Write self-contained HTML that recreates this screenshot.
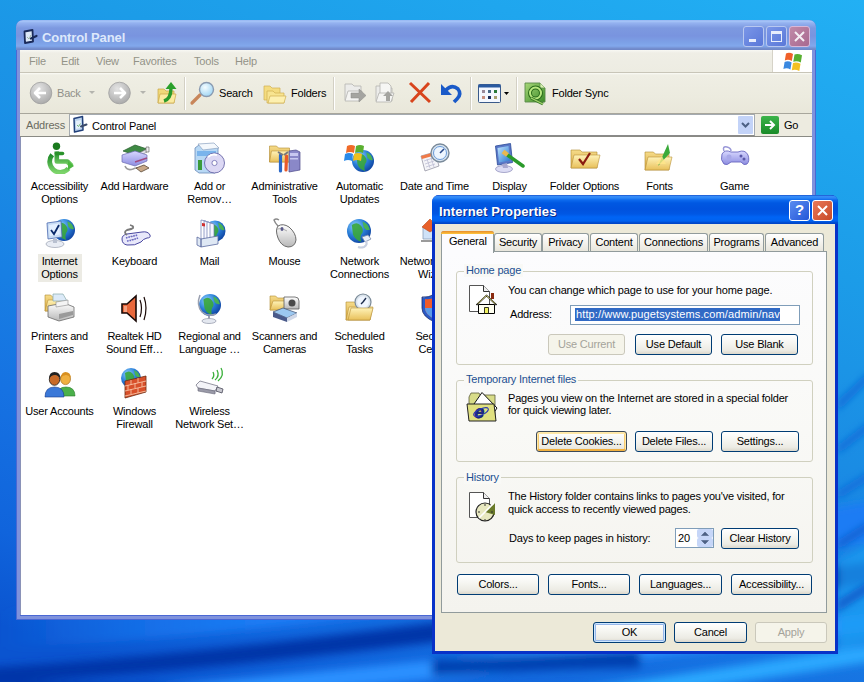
<!DOCTYPE html>
<html><head><meta charset="utf-8">
<style>
*{margin:0;padding:0;box-sizing:border-box}
html,body{width:864px;height:682px;overflow:hidden}
body{position:relative;font-family:"Liberation Sans",sans-serif;font-size:11px;color:#000;letter-spacing:-0.2px;
background:linear-gradient(200deg,#24b2f4 0%,#1c9ce8 25%,#1a8ce2 38%,#1574dc 58%,#0e5ad0 78%,#0a4cc6 100%);}
.a{position:absolute}
.t{position:absolute;white-space:nowrap;line-height:13px}
.sep{position:absolute;width:2px;border-left:1px solid #d3d0c4;border-right:1px solid #fff}
.btn{position:absolute;height:21px;border:1px solid #003c74;border-radius:3px;background:linear-gradient(180deg,#fff 0,#f6f6f2 40%,#ecebe4 80%,#dcd8cc 100%);text-align:center;line-height:19px;white-space:nowrap}
.btn.dis{border-color:#cac8bb;color:#a4a39a;background:#f5f4ea}
.grp{position:absolute;border:1px solid #d0d0bf;border-radius:3px}
.gl{position:absolute;color:#1d5092;background:#f9f9f6;padding:0 2px;line-height:13px;white-space:nowrap}
.lbl{position:absolute;width:75px;text-align:center;line-height:13px}
.tab{position:absolute;top:233px;height:18px;border:1px solid #919b9c;border-bottom:none;border-radius:3px 3px 0 0;background:linear-gradient(180deg,#fff 0,#f4f3ee 50%,#e8e6dc 100%);text-align:center;line-height:17px}
</style></head><body>

<!--BG--><svg class="a" style="left:0;top:0" width="864" height="682">
<defs>
<linearGradient id="bgg" gradientUnits="userSpaceOnUse" x1="864" y1="0" x2="560" y2="830">
<stop offset="0" stop-color="#22b0f4"/><stop offset="0.3" stop-color="#1c9ce8"/><stop offset="0.5" stop-color="#1a8ce4"/><stop offset="0.75" stop-color="#1672e2"/><stop offset="0.9" stop-color="#1064dc"/><stop offset="1" stop-color="#0a54d0"/>
</linearGradient>
<filter id="bl5" x="-50%" y="-100%" width="200%" height="300%"><feGaussianBlur stdDeviation="4"/></filter>
<filter id="bl3" x="-100%" y="-100%" width="300%" height="300%"><feGaussianBlur stdDeviation="3"/></filter>
<linearGradient id="fadeL" gradientUnits="userSpaceOnUse" x1="0" y1="0" x2="260" y2="0"><stop offset="0" stop-color="#1a7cf4" stop-opacity="0"/><stop offset="1" stop-color="#1a7cf4"/></linearGradient>
<linearGradient id="fadeL2" gradientUnits="userSpaceOnUse" x1="0" y1="0" x2="200" y2="0"><stop offset="0" stop-color="#2a90ff" stop-opacity="0.3"/><stop offset="1" stop-color="#2a90ff"/></linearGradient>
</defs>
<rect width="864" height="682" fill="url(#bgg)"/>
<g filter="url(#bl5)">
<path d="M-20 612 Q300 596 880 500 L880 540 Q300 640 -20 648Z" fill="url(#fadeL)"/>
<path d="M-20 668 Q250 655 880 560 L880 582 Q300 668 -20 684Z" fill="#0436a8"/>
<path d="M-20 700 Q400 668 880 612 L880 630 Q450 684 -20 716Z" fill="url(#fadeL2)"/>
<path d="M-20 704 L-20 680 Q200 686 400 700Z" fill="#0638ac"/>
<path d="M500 700 Q700 672 880 644 L880 660 Q700 690 520 710Z" fill="#2aa8ff"/>
<path d="M432 660 Q520 656 640 650 L640 668 Q520 670 432 676Z" fill="#0640b0"/>
<path d="M838 560 L880 540 L880 640 L838 650Z" fill="#18a0f4" opacity="0.7"/>
</g>
<g filter="url(#bl3)">
<path d="M838 400 L870 370 L870 380 L838 412Z" fill="#0a6ad8" opacity="0.8"/>
<path d="M838 445 L870 420 L870 430 L838 455Z" fill="#0a6ad8" opacity="0.8"/>
<path d="M838 490 L870 470 L870 480 L838 500Z" fill="#0a6ad8" opacity="0.7"/>
<path d="M838 540 L870 520 L870 530 L838 550Z" fill="#0a60d0" opacity="0.8"/>
<path d="M838 600 L870 580 L870 592 L838 612Z" fill="#0a58c8" opacity="0.8"/>
</g>
</svg><!--/BG-->
<!-- ===== CONTROL PANEL WINDOW ===== -->
<div class="a" style="left:16px;top:20px;width:800px;height:600px;border-radius:7px 7px 0 0;background:#4a68d4;overflow:hidden">
  <div class="a" style="left:0;top:0;width:800px;height:30px;background:linear-gradient(180deg,#8fb0f0 0,#a8c6f8 1px,#94b2f0 3px,#7d99e0 8px,#7994df 16px,#7ca0e6 22px,#82a8ec 26px,#7088c8 29px)"></div>
  <div class="a" style="left:1px;top:30px;width:3px;height:569px;background:#7f92dc"></div>
  <div class="a" style="left:796px;top:30px;width:3px;height:569px;background:#7f92dc"></div>
  <div class="a" style="left:1px;top:596px;width:798px;height:3px;background:#7f92dc"></div>
</div>
<div class="t" style="left:42px;top:30px;font-weight:bold;font-size:13px;line-height:16px;color:#dde8fb;letter-spacing:-0.1px">Control Panel</div>
<!-- CP titlebar buttons -->
<div class="a" style="left:743px;top:26px;width:21px;height:21px;border:1px solid #b8c8f0;border-radius:3px;background:linear-gradient(135deg,#7a96e8,#5a78d8)"></div>
<div class="a" style="left:749px;top:39px;width:7px;height:3px;background:#e8eefc"></div>
<div class="a" style="left:766px;top:26px;width:21px;height:21px;border:1px solid #b8c8f0;border-radius:3px;background:linear-gradient(135deg,#7a96e8,#5a78d8)"></div>
<div class="a" style="left:771px;top:31px;width:11px;height:11px;border:1px solid #e8eefc;border-top-width:3px"></div>
<div class="a" style="left:789px;top:26px;width:21px;height:21px;border:1px solid #d8b8d8;border-radius:3px;background:linear-gradient(135deg,#c08aa8,#a86890)"></div>
<svg class="a" style="left:789px;top:26px" width="21" height="21"><path d="M6 6L15 15M15 6L6 15" stroke="#f4eef4" stroke-width="2"/></svg>

<!-- CP client -->
<div class="a" style="left:20px;top:50px;width:792px;height:565px;background:#fff;border-left:1px solid #8a92b8"></div>
<!-- menu bar -->
<div class="a" style="left:20px;top:50px;width:792px;height:23px;background:linear-gradient(180deg,#f8f8f4 0,#efeee6 3px,#edece2 100%);border-bottom:1px solid #c8c5b8"></div>
<div class="a" style="left:772px;top:50px;width:40px;height:22px;background:#fff;border-left:1px solid #d6d3c8"></div>
<div class="t" style="left:29px;top:55px;color:#939388">File</div>
<div class="t" style="left:61px;top:55px;color:#939388">Edit</div>
<div class="t" style="left:96px;top:55px;color:#939388">View</div>
<div class="t" style="left:133px;top:55px;color:#939388">Favorites</div>
<div class="t" style="left:194px;top:55px;color:#939388">Tools</div>
<div class="t" style="left:235px;top:55px;color:#939388">Help</div>
<!-- toolbar -->
<div class="a" style="left:20px;top:73px;width:792px;height:41px;background:linear-gradient(180deg,#fbfbf7 0,#efeee4 2px,#ecebdf 60%,#e9e7da 100%);border-bottom:1px solid #a8a69c"></div>
<div class="sep" style="left:184px;top:77px;height:33px"></div>
<div class="sep" style="left:333px;top:77px;height:33px"></div>
<div class="sep" style="left:470px;top:77px;height:33px"></div>
<div class="sep" style="left:516px;top:77px;height:33px"></div>
<div class="t" style="left:57px;top:87px;color:#8f8f88">Back</div>
<div class="t" style="left:219px;top:87px">Search</div>
<div class="t" style="left:291px;top:87px">Folders</div>
<div class="t" style="left:552px;top:87px">Folder Sync</div>
<!-- address bar -->
<div class="a" style="left:20px;top:114px;width:792px;height:23px;background:#edebe0;border-bottom:1px solid #8a8a84"></div>
<div class="t" style="left:26px;top:119px;color:#6b6b62">Address</div>
<div class="a" style="left:69px;top:114px;width:686px;height:22px;background:#fff;border:1px solid #a4aab0;border-bottom-color:#8a8a8a"></div>
<div class="t" style="left:92px;top:120px">Control Panel</div>
<div class="a" style="left:738px;top:116px;width:15px;height:18px;background:#c3d3f8;border-radius:1px"></div>
<svg class="a" style="left:738px;top:116px" width="15" height="18"><path d="M4 7L7.5 10.5L11 7" stroke="#4d6185" stroke-width="2" fill="none"/></svg>
<div class="a" style="left:761px;top:116px;width:18px;height:18px;background:linear-gradient(180deg,#3cb44a,#198a28);border-radius:2px"></div>
<svg class="a" style="left:761px;top:116px" width="18" height="18"><path d="M4 9H13M9 5L13 9L9 13" stroke="#fff" stroke-width="2" fill="none"/></svg>
<div class="t" style="left:784px;top:119px">Go</div>

<!--TB-->
<svg class="a" style="left:0;top:0;overflow:visible" width="864" height="140">
<defs>
<radialGradient id="gcirc" cx="0.4" cy="0.3" r="0.8"><stop offset="0" stop-color="#e4e4e4"/><stop offset="1" stop-color="#a4a4a4"/></radialGradient>
<radialGradient id="glens" cx="0.4" cy="0.35" r="0.7"><stop offset="0" stop-color="#f4fcff"/><stop offset="1" stop-color="#9cd4f4"/></radialGradient>
<linearGradient id="gsync" x1="0" y1="0" x2="1" y2="1"><stop offset="0" stop-color="#a8d878"/><stop offset="1" stop-color="#3a8a28"/></linearGradient>
</defs>
<!-- back -->
<circle cx="41" cy="93" r="10.8" fill="url(#gcirc)" stroke="#a0a0a0" stroke-width="0.8"/>
<path d="M46 93H36M40 88L35 93L40 98" stroke="#fff" stroke-width="2.6" fill="none" stroke-linejoin="round"/>
<path d="M89 91h6l-3 3z" fill="#b4b4ae"/>
<!-- forward -->
<circle cx="119.5" cy="93" r="10.8" fill="url(#gcirc)" stroke="#a0a0a0" stroke-width="0.8"/>
<path d="M114 93H124M120 88L125 93L120 98" stroke="#fff" stroke-width="2.6" fill="none" stroke-linejoin="round"/>
<path d="M140 91h6l-3 3z" fill="#b4b4ae"/>
<!-- up -->
<path d="M158 89h6l2 2h8v12h-16z" fill="#f0d878" stroke="#c8a848" stroke-width="0.7"/>
<path d="M158 103l2-9h16l-2 9z" fill="#fbeaa0" stroke="#c8a848" stroke-width="0.7"/>
<path d="M164 101q7-2 7-13" stroke="#2a9a2a" stroke-width="3.4" fill="none"/>
<path d="M165.5 89l5.5-7l5.5 7z" fill="#2aa02a"/>
<!-- search -->
<path d="M192 103L200 95" stroke="#c8865a" stroke-width="3.2" stroke-linecap="round"/>
<circle cx="206.5" cy="89.5" r="7" fill="url(#glens)" stroke="#8a9ab0" stroke-width="1.4"/>
<!-- folders -->
<path d="M264 86h6l2 2h8v12h-16z" fill="#f4dc80" stroke="#d0b050" stroke-width="0.7"/>
<path d="M267 91h6l2 2h9v10h-17z" fill="#f8e490" stroke="#d0b050" stroke-width="0.7"/>
<path d="M268 103l2-7h16l-2 7z" fill="#fdf0b0" stroke="#d0b050" stroke-width="0.7"/>
<!-- move to -->
<path d="M345 84h7l2 2h7v14h-16z" fill="#ececea" stroke="#b4b4b0" stroke-width="0.8"/>
<path d="M345 101l3-10h14l-3 10z" fill="#f4f4f2" stroke="#b4b4b0" stroke-width="0.8"/>
<path d="M351 93h8v-4l7 6.5l-7 6.5v-4h-8z" fill="#a4a4a0" stroke="#8a8a86" stroke-width="0.5"/>
<!-- copy to -->
<path d="M376 86h7l2 2h7v13h-16z" fill="#ececea" stroke="#b4b4b0" stroke-width="0.8"/>
<path d="M380 83h8l3 3v10h-11z" fill="#f6f6f4" stroke="#b4b4b0" stroke-width="0.8"/>
<path d="M376 102l3-9h15l-3 9z" fill="#f4f4f2" stroke="#b4b4b0" stroke-width="0.8"/>
<path d="M386 101v-5h-3l5-5l5 5h-3v5z" fill="#a4a4a0"/>
<!-- delete -->
<path d="M410 83L430 102M429 83L411 102" stroke="#d8441c" stroke-width="3"/>
<!-- undo -->
<path d="M446 90q6-6 12-1q4 5-1 10l-3 3" stroke="#1a5ac8" stroke-width="3.6" fill="none"/>
<path d="M441 84v11h11z" fill="#1a5ac8"/>
<!-- views -->
<rect x="478.5" y="84.5" width="22" height="18" rx="1" fill="#f4f8ff" stroke="#3a5a8a"/>
<rect x="478.5" y="84.5" width="22" height="3" fill="#2a5aa0"/>
<rect x="482" y="90" width="3" height="3" fill="#9a8a9a"/><rect x="488" y="90" width="3" height="3" fill="#4a6a8a"/><rect x="494" y="90" width="3" height="3" fill="#2a7a3a"/>
<rect x="482" y="96" width="3" height="3" fill="#c89080"/><rect x="488" y="96" width="3" height="3" fill="#1a2a5a"/><rect x="494" y="96" width="3" height="3" fill="#a8a070"/>
<path d="M504 92h5l-2.5 3z" fill="#000"/>
<!-- folder sync -->
<path d="M525 83h15l5 5v14h-20z" fill="url(#gsync)" stroke="#5a8a4a" stroke-width="0.9"/>
<path d="M540 83v5h5" fill="#d8f0b0" stroke="#5a8a4a" stroke-width="0.7"/>
<circle cx="535.5" cy="93" r="5.5" fill="none" stroke="#2a6a1a" stroke-width="4"/>
<circle cx="535.5" cy="93" r="5.5" fill="none" stroke="#b8e880" stroke-width="2"/>
<path d="M531 98l12 6" stroke="#3a7a2a" stroke-width="3"/>
<path d="M531 98l12 6" stroke="#a8d870" stroke-width="1.2"/>
<!-- CP title icon -->
<path d="M24.5 31.5l8-1.5l0.5 11.5l-8 1.5z" fill="#dce8f8" stroke="#1a2a5a" stroke-width="1.8" stroke-linejoin="round"/>
<path d="M31 38.5l5.5-2.5" stroke="#1a2a5a" stroke-width="2.2" stroke-linecap="round"/>
<path d="M27 37l2 2l2-4" stroke="#9ab0a0" stroke-width="0.9" fill="none"/>
<!-- address icon -->
<path d="M74 118.5l8.5-2l0.5 13.5l-8.5 2z" fill="#bcd4ee" stroke="#22407a" stroke-width="1.5" stroke-linejoin="round"/>
<path d="M76 121l5-1v8l-5 1z" fill="#e4f0fa"/>
<path d="M81 126.5l5.5-2" stroke="#3a4a6a" stroke-width="2" stroke-linecap="round"/>
<path d="M77 125l1.5 1.5l2-3" stroke="#6ab06a" stroke-width="0.9" fill="none"/>
<!-- windows logo -->
<path d="M786 53.5q3.5-1.5 7 0.5l-1.2 7q-3.5-2-7 -0.5z" fill="#f0602a"/>
<path d="M794.5 54.5q3.5-1.2 7.5 0.8l-1.2 7.2q-3.8-2-7.5-0.8z" fill="#58b030"/>
<path d="M784.6 62q3.5-1.5 7 0.5l-1.2 7q-3.5-2-7-0.5z" fill="#3a88e0"/>
<path d="M793 63q3.5-1.2 7.5 0.8l-1.2 7.2q-3.8-2-7.5-0.8z" fill="#f4c020"/>
</svg>
<!--/TB-->
<!--ICONS-->
<svg width="0" height="0" style="position:absolute"><defs>
<linearGradient id="gfold" x1="0" y1="0" x2="0" y2="1"><stop offset="0" stop-color="#fff3b8"/><stop offset="1" stop-color="#e8c05a"/></linearGradient>
<linearGradient id="gfoldb" x1="0" y1="0" x2="0" y2="1"><stop offset="0" stop-color="#f6dc8a"/><stop offset="1" stop-color="#d8a840"/></linearGradient>
<radialGradient id="gglobe" cx="0.35" cy="0.3" r="0.8"><stop offset="0" stop-color="#8fd4ff"/><stop offset="0.5" stop-color="#2a7ed8"/><stop offset="1" stop-color="#0a3a98"/></radialGradient>
<linearGradient id="ggreen" x1="0" y1="0" x2="0" y2="1"><stop offset="0" stop-color="#1e8a28"/><stop offset="1" stop-color="#7cd46a"/></linearGradient>
<linearGradient id="glav" x1="0" y1="0" x2="0" y2="1"><stop offset="0" stop-color="#d8d8ff"/><stop offset="1" stop-color="#8c8ce0"/></linearGradient>
<linearGradient id="gscr" x1="0" y1="0" x2="1" y2="1"><stop offset="0" stop-color="#bfe4ff"/><stop offset="1" stop-color="#2a78d0"/></linearGradient>
<linearGradient id="ggray" x1="0" y1="0" x2="0" y2="1"><stop offset="0" stop-color="#ffffff"/><stop offset="1" stop-color="#b8b8b8"/></linearGradient>
</defs></svg>
<div class="a" style="left:38px;top:254px;width:44px;height:28px;background:#ecebe4"></div>
<svg class="a" style="left:44px;top:142px" width="32" height="32" viewBox="0 0 32 32"><circle cx="12.5" cy="4.3" r="3.7" fill="#1a7a1e"/>
<path d="M12.8 9.5v10h10.5l4.5 4.5" stroke="url(#ggreen)" stroke-width="4.6" fill="none" stroke-linejoin="round"/>
<path d="M12.5 11.5h6" stroke="#2a922a" stroke-width="3.6" stroke-linecap="round"/>
<path d="M8.2 12.8A9.6 9.6 0 1 0 24.5 26.5" stroke="url(#ggreen)" stroke-width="4.8" fill="none"/>
<path d="M24 19l6 5l-6 4z" fill="#4cb840"/>
</svg>
<div class="lbl" style="left:22px;top:180px">Accessibility<br>Options</div>
<svg class="a" style="left:119px;top:142px" width="32" height="32" viewBox="0 0 32 32"><path d="M4 9l12-6l12 4l-12 6z" fill="#3f8a44" stroke="#235a28" stroke-width="0.7"/>
<path d="M16 13l12-6v3l-12 6z" fill="#e4e4ee" stroke="#777" stroke-width="0.6"/>
<path d="M27 5h3v5h-3z" fill="#eee" stroke="#555" stroke-width="0.6"/>
<path d="M3 13l13-4l12 4v6l-12 5l-13-4z" fill="url(#glav)" stroke="#6a6ab0" stroke-width="0.7"/>
<path d="M16 20l12-4" stroke="#a04a80" stroke-width="1.5"/>
<path d="M6 24q2 5 8 3q4-2 6 0" stroke="#9a9a9a" stroke-width="1.6" fill="none"/>
<path d="M17 26l8-3l5 3l-8 4z" fill="#c8a888" stroke="#5a4a3a" stroke-width="0.8"/></svg>
<div class="lbl" style="left:97px;top:180px">Add Hardware</div>
<svg class="a" style="left:194px;top:142px" width="32" height="32" viewBox="0 0 32 32"><path d="M1 6l4-3h16l3 3v22l-3 3h-16l-4-3z" fill="#b8d8f4" stroke="#6a8ab8" stroke-width="0.8"/>
<path d="M4 2l16-1l5 5l-16 2z" fill="#f4f8fc" stroke="#8aa0c0" stroke-width="0.7"/>
<path d="M3 9h19v5h-19z" fill="#7ab4ec"/>
<path d="M4 18h4v10h-4z" fill="#3a9a3a"/>
<circle cx="20.5" cy="21" r="10" fill="#dcd8f4" stroke="#6a68a8" stroke-width="0.9"/>
<path d="M14 15a9 9 0 0 1 9-2" stroke="#fff" stroke-width="2" fill="none"/>
<circle cx="20.5" cy="21" r="2.6" fill="#fff" stroke="#7a78b8" stroke-width="0.9"/>
</svg>
<div class="lbl" style="left:172px;top:180px">Add or<br>Remov…</div>
<svg class="a" style="left:269px;top:142px" width="32" height="32" viewBox="0 0 32 32"><path d="M0.5 4h7l2 2h11v14h-20z" fill="url(#gfoldb)" stroke="#b08a30" stroke-width="0.6"/>
<path d="M0.5 20l2-11h19l-1 11z" fill="url(#gfold)" stroke="#b8913a" stroke-width="0.6"/>
<path d="M20 9l7-1l4 2v18l-11 2z" fill="#8a88c8" stroke="#4a4888" stroke-width="0.7"/>
<path d="M21 11h8v3h-8zM21 16h8v1.5h-8z" fill="#c8c8f0"/>
<path d="M11.5 13v16" stroke="#2a68c8" stroke-width="3.2" stroke-linecap="round"/>
<path d="M17.5 14l-0.5 14" stroke="#e85a28" stroke-width="3.2" stroke-linecap="round"/>
<path d="M9 10l5 3M15 13l4-3" stroke="#7a7a7a" stroke-width="2"/>
</svg>
<div class="lbl" style="left:247px;top:180px">Administrative<br>Tools</div>
<svg class="a" style="left:344px;top:142px" width="32" height="32" viewBox="0 0 32 32"><circle cx="19" cy="19" r="11" fill="url(#gglobe)"/><path d="M12.4 13.5q4.4 -3.3 7.699999999999999 0t2.2 6.6q-3.3 4.4 -1.1 8.8q-5.5 -1.1 -7.699999999999999 -6.6z" fill="#3aa63a" opacity="0.9"/><path d="M22.3 10.2q5.5 2.2 6.6 7.699999999999999q-3.3 1.1 -5.5 -2.2z" fill="#4cb848" opacity="0.9"/><path d="M3 4q4-2 8 0l-1 7q-4-2-8 0z" fill="#f06a28"/>
<path d="M12 4q4-2 8 0l-1 7q-4-2-8 0z" fill="#5ab030"/>
<path d="M1 12q4-2 8 0l-1 7q-4-2-8 0z" fill="#2a8ae8"/>
<path d="M10 12q4-2 8 0l-1 7q-4-2-8 0z" fill="#f0c020"/></svg>
<div class="lbl" style="left:322px;top:180px">Automatic<br>Updates</div>
<svg class="a" style="left:419px;top:142px" width="32" height="32" viewBox="0 0 32 32"><path d="M2 14l14-4l4 14l-14 5z" fill="#f4f4f8" stroke="#8a8a9a" stroke-width="0.7"/>
<path d="M2 14l14-4l1 3l-14 4z" fill="#f07a48"/>
<path d="M5 19l9-3M6 22l9-3M7 25l9-3M8 17l3 9M12 16l3 9" stroke="#b8b8d0" stroke-width="0.7"/>
<circle cx="21" cy="11" r="9" fill="#d8e4f0" stroke="#7a8a9a" stroke-width="1.4"/>
<circle cx="21" cy="11" r="6.5" fill="#eef6ff" stroke="#6a9ad8" stroke-width="1"/>
<path d="M21 11l4-4" stroke="#2a4a8a" stroke-width="1.6"/></svg>
<div class="lbl" style="left:397px;top:180px">Date and Time</div>
<svg class="a" style="left:494px;top:142px" width="32" height="32" viewBox="0 0 32 32"><path d="M1.5 4l15-2.5l2 19l-15 2.5z" fill="#5a78c8" stroke="#2a4a98" stroke-width="0.8"/>
<path d="M3.5 6l11-2l1.5 14.5l-11 2z" fill="url(#gscr)"/>
<ellipse cx="10" cy="27" rx="8.5" ry="3.5" fill="#dcdcf4" stroke="#8a8ab8" stroke-width="0.7"/>
<path d="M8 22l5-1l1 5h-5z" fill="#a8a8d0"/>
<path d="M12 12l17 12" stroke="#2a9a2a" stroke-width="3.5" stroke-linecap="round"/>
<path d="M9 9.5l4.5 3.5" stroke="#e8b850" stroke-width="4.5"/>
</svg>
<div class="lbl" style="left:472px;top:180px">Display</div>
<svg class="a" style="left:569px;top:142px" width="32" height="32" viewBox="0 0 32 32"><path d="M2 8h9.1l2 2h14.900000000000002v16h-26z" fill="url(#gfoldb)" stroke="#b08a30" stroke-width="0.6"/><path d="M2 26l3 -13h26l-3 13z" fill="url(#gfold)" stroke="#b8913a" stroke-width="0.6"/><path d="M10 17l4 5l7-11" stroke="#8a1a10" stroke-width="2.2" fill="none"/></svg>
<div class="lbl" style="left:547px;top:180px">Folder Options</div>
<svg class="a" style="left:644px;top:142px" width="32" height="32" viewBox="0 0 32 32"><path d="M1 10h8.399999999999999l2 2h13.600000000000001v16h-24z" fill="url(#gfoldb)" stroke="#b08a30" stroke-width="0.6"/><path d="M1 28l3 -13h24l-3 13z" fill="url(#gfold)" stroke="#b8913a" stroke-width="0.6"/><path d="M14 24l10-22l2 9z" fill="#3aaa3a"/><path d="M12 22l6-8l4 8z" fill="#ffe68a" opacity="0.8"/></svg>
<div class="lbl" style="left:622px;top:180px">Fonts</div>
<svg class="a" style="left:719px;top:142px" width="32" height="32" viewBox="0 0 32 32"><path d="M3 12q3-5 9-2h7q7-3 10 3q2 6-1 9q-3 2-6-2h-10q-4 4-7 2q-4-4-2-10z" fill="url(#glav)" stroke="#6a68c0" stroke-width="0.9"/>
<path d="M5 9q-2-5 3-4q4 1 4 4" stroke="#9a98d8" stroke-width="1.5" fill="none"/>
<circle cx="10" cy="15" r="2.5" fill="#a8a8e8"/><circle cx="22" cy="14" r="1.5" fill="#5a58a8"/><circle cx="25" cy="17" r="1.5" fill="#5a58a8"/></svg>
<div class="lbl" style="left:697px;top:180px">Game<br>Controllers</div>
<svg class="a" style="left:44px;top:217px" width="32" height="32" viewBox="0 0 32 32"><circle cx="20" cy="13" r="11" fill="url(#gglobe)"/><path d="M13.4 7.5q4.4 -3.3 7.699999999999999 0t2.2 6.6q-3.3 4.4 -1.1 8.8q-5.5 -1.1 -7.699999999999999 -6.6z" fill="#3aa63a" opacity="0.9"/><path d="M23.3 4.199999999999999q5.5 2.2 6.6 7.699999999999999q-3.3 1.1 -5.5 -2.2z" fill="#4cb848" opacity="0.9"/><path d="M3 6l14-2l1 16l-14 2z" fill="#c8dcf4" stroke="#4a6ab0" stroke-width="0.8"/>
<path d="M5 8l10-1.5l0.8 11l-10 1.5z" fill="#e4f0ff"/>
<path d="M7 13l3 4l5-9" stroke="#0a2a6a" stroke-width="1.8" fill="none"/>
<ellipse cx="11" cy="27" rx="9" ry="3.5" fill="#e8ecf4" stroke="#9aa0b0" stroke-width="0.7"/>
<path d="M9 22h4v4h-4z" fill="#b8c0d0"/></svg>
<div class="lbl" style="left:22px;top:255px">Internet<br>Options</div>
<svg class="a" style="left:119px;top:217px" width="32" height="32" viewBox="0 0 32 32"><path d="M3 22q0-4 5-5l15-2q6-1 8 3q1 3-3 3q-4 1-6 4q-6 4-14 3q-5-1-5-6z" fill="#e8e8fa" stroke="#4a48a0" stroke-width="1"/>
<path d="M7 21q6-2 12-3M8 24q6-1 11-3" stroke="#6a68c8" stroke-width="1.6" stroke-dasharray="1.5 1"/>
<path d="M8 18q-4-3 0-5q5-1 6-2q1-2-3-3" stroke="#7a7a7a" stroke-width="1.8" fill="none"/>
</svg>
<div class="lbl" style="left:97px;top:255px">Keyboard</div>
<svg class="a" style="left:194px;top:217px" width="32" height="32" viewBox="0 0 32 32"><circle cx="21" cy="14" r="10.5" fill="url(#gglobe)"/><path d="M14.7 8.75q4.2 -3.15 7.35 0t2.1 6.3q-3.15 4.2 -1.05 8.4q-5.25 -1.05 -7.35 -6.3z" fill="#3aa63a" opacity="0.9"/><path d="M24.15 5.6q5.25 2.1 6.3 7.35q-3.15 1.05 -5.25 -2.1z" fill="#4cb848" opacity="0.9"/><path d="M7 3l5 1v19l-5-1z" fill="#fff" stroke="#6a7ab0" stroke-width="0.7"/>
<path d="M10 4l5 1v19l-5-1z" fill="#f8f8ff" stroke="#6a7ab0" stroke-width="0.7"/>
<path d="M13 5l5 1v19l-5-1z" fill="#fff" stroke="#6a7ab0" stroke-width="0.7"/>
<path d="M16 6l4 1v18l-4-1z" fill="#f4f4ff" stroke="#6a7ab0" stroke-width="0.7"/>
<path d="M8 6l3 0.6v3l-3-0.6z" fill="#d03030"/>
<path d="M3 20l4 2v8l-4-2zM7 22l17-3v8l-17 3z" fill="#dfe8f4" stroke="#5a6aa0" stroke-width="0.8"/>
</svg>
<div class="lbl" style="left:172px;top:255px">Mail</div>
<svg class="a" style="left:269px;top:217px" width="32" height="32" viewBox="0 0 32 32"><path d="M9 9q5-3 11 1q7 6 7 13q-1 7-8 7q-7-1-10-9q-3-8 0-12z" fill="url(#ggray)" stroke="#6a6a6a" stroke-width="1"/>
<path d="M8 12q5-2 10 2" stroke="#9a9a9a" stroke-width="0.8" fill="none"/>
<ellipse cx="13" cy="12" rx="1.5" ry="2" fill="#5a5a8a"/>
<path d="M9 9q-3-3-4-6q2-2 5 0" stroke="#8a8a8a" stroke-width="1.4" fill="none"/></svg>
<div class="lbl" style="left:247px;top:255px">Mouse</div>
<svg class="a" style="left:344px;top:217px" width="32" height="32" viewBox="0 0 32 32"><circle cx="15" cy="14" r="12" fill="url(#gglobe)"/><path d="M7.800000000000001 8.0q4.800000000000001 -3.5999999999999996 8.399999999999999 0t2.4000000000000004 7.199999999999999q-3.5999999999999996 4.800000000000001 -1.2000000000000002 9.600000000000001q-6.0 -1.2000000000000002 -8.399999999999999 -7.199999999999999z" fill="#3aa63a" opacity="0.9"/><path d="M18.6 4.399999999999999q6.0 2.4000000000000004 7.199999999999999 8.399999999999999q-3.5999999999999996 1.2000000000000002 -6.0 -2.4000000000000004z" fill="#4cb848" opacity="0.9"/><path d="M18 20l6-2l3 4l-6 3z" fill="#e8eef8" stroke="#7a8aa8" stroke-width="0.8"/>
<path d="M22 24q2 4-2 6q-3 1-6 0" stroke="#c8d0e0" stroke-width="2" fill="none"/></svg>
<div class="lbl" style="left:322px;top:255px">Network<br>Connections</div>
<svg class="a" style="left:419px;top:217px" width="32" height="32" viewBox="0 0 32 32"><path d="M4 22h22v-12h-22z" fill="#cfe2f8" stroke="#8aa0b8" stroke-width="0.8"/>
<path d="M2 24h26" stroke="#7a7a7a" stroke-width="1.5"/>
<path d="M3 10l8-8l8 8l-8 5z" fill="#e8602a" stroke="#b84a1a" stroke-width="0.6"/>
</svg>
<div class="lbl" style="left:397px;top:255px">Network Setup<br>Wizard</div>
<svg class="a" style="left:44px;top:292px" width="32" height="32" viewBox="0 0 32 32"><path d="M1 3h5.6l2 2h8.4v14h-16z" fill="url(#gfoldb)" stroke="#b08a30" stroke-width="0.6"/><path d="M1 19l3 -11h16l-3 11z" fill="url(#gfold)" stroke="#b8913a" stroke-width="0.6"/><path d="M9 2h10l4 7h-14z" fill="#dceaf8" stroke="#8aa" stroke-width="0.7"/>
<path d="M4 14l16-3l10 4v10l-15 4l-11-4z" fill="url(#ggray)" stroke="#6a6a6a" stroke-width="0.8"/>
<path d="M15 22l14-3v4l-14 4z" fill="#9a9a9a"/>
<path d="M12 10l12-2v5l-12 2z" fill="#f4f4f4" stroke="#8a8a8a" stroke-width="0.6"/></svg>
<div class="lbl" style="left:22px;top:330px">Printers and<br>Faxes</div>
<svg class="a" style="left:119px;top:292px" width="32" height="32" viewBox="0 0 32 32"><path d="M3 12h5l9-8v25l-9-8h-5z" fill="#e8683c" stroke="#1a0a08" stroke-width="1.6"/>
<path d="M5 14h3v6h-3z" fill="#f4a080"/>
<path d="M21 8q3 8 0 17M25 5q4 11 0 23" stroke="#1a0a08" stroke-width="1.2" fill="none"/></svg>
<div class="lbl" style="left:97px;top:330px">Realtek HD<br>Sound Eff…</div>
<svg class="a" style="left:194px;top:292px" width="32" height="32" viewBox="0 0 32 32"><circle cx="16" cy="13" r="11" fill="url(#gglobe)"/><path d="M9.4 7.5q4.4 -3.3 7.699999999999999 0t2.2 6.6q-3.3 4.4 -1.1 8.8q-5.5 -1.1 -7.699999999999999 -6.6z" fill="#3aa63a" opacity="0.9"/><path d="M19.3 4.199999999999999q5.5 2.2 6.6 7.699999999999999q-3.3 1.1 -5.5 -2.2z" fill="#4cb848" opacity="0.9"/><path d="M6 3q-4 10 2 17q6 5 14 2" stroke="#9aa0b0" stroke-width="1.5" fill="none"/>
<path d="M15 24v3" stroke="#9aa0b0" stroke-width="2"/>
<ellipse cx="15" cy="29" rx="7" ry="2.5" fill="#e4e8f0" stroke="#9aa0b0" stroke-width="0.8"/></svg>
<div class="lbl" style="left:172px;top:330px">Regional and<br>Language …</div>
<svg class="a" style="left:269px;top:292px" width="32" height="32" viewBox="0 0 32 32"><path d="M1 4h5.6l2 2h8.4v12h-16z" fill="url(#gfoldb)" stroke="#b08a30" stroke-width="0.6"/><path d="M1 18l3 -9h16l-3 9z" fill="url(#gfold)" stroke="#b8913a" stroke-width="0.6"/><path d="M15 5h11q4 0 4 4v8h-15z" fill="url(#ggray)" stroke="#5a5a5a" stroke-width="0.8"/>
<circle cx="23" cy="11" r="3.5" fill="#4a4a4a"/>
<path d="M4 20l10-4l14 5l-10 5z" fill="#9cc8f0" stroke="#4a5a7a" stroke-width="0.8"/>
<path d="M4 20l14 6v4l-14-5z" fill="#4a5a8a"/>
<path d="M18 26l10-5v4l-10 5z" fill="#d0d8e8"/></svg>
<div class="lbl" style="left:247px;top:330px">Scanners and<br>Cameras</div>
<svg class="a" style="left:344px;top:292px" width="32" height="32" viewBox="0 0 32 32"><path d="M2 10h8.399999999999999l2 2h13.600000000000001v16h-24z" fill="url(#gfoldb)" stroke="#b08a30" stroke-width="0.6"/><path d="M2 28l3 -13h24l-3 13z" fill="url(#gfold)" stroke="#b8913a" stroke-width="0.6"/><circle cx="19" cy="10" r="8" fill="#dbe4ec" stroke="#7a8a98" stroke-width="1.2"/>
<circle cx="19" cy="10" r="5.8" fill="#f0f6ff"/>
<path d="M19 10l3-4M19 10l-2 2" stroke="#1a2a4a" stroke-width="1.4"/>
<path d="M4 28l3-12h22l-3 12z" fill="url(#gfold)" stroke="#b8913a" stroke-width="0.6"/></svg>
<div class="lbl" style="left:322px;top:330px">Scheduled<br>Tasks</div>
<svg class="a" style="left:419px;top:292px" width="32" height="32" viewBox="0 0 32 32"><path d="M16 2q7 4 13 3v11q0 9-13 14q-13-5-13-14v-11q6 1 13-3z" fill="#2a5ac8" stroke="#1a2a6a" stroke-width="0.8"/>
<path d="M16 5q5 3 10 2v9q0 7-10 11q-10-4-10-11v-9q5 1 10-2z" fill="#f05a28"/>
<path d="M6 16h20q0 7-10 11q-10-4-10-11z" fill="#5a9ae8"/></svg>
<div class="lbl" style="left:397px;top:330px">Security<br>Center</div>
<svg class="a" style="left:44px;top:367px" width="32" height="32" viewBox="0 0 32 32"><path d="M13 29q0-9 9-9q9 0 9 9z" fill="#4ab04a" stroke="#2a7a2a" stroke-width="0.6"/>
<ellipse cx="21.5" cy="12" rx="5" ry="5.6" fill="#f0b040" stroke="#a87020" stroke-width="0.7"/>
<path d="M16.5 11q1-6 5-6q5 0 5.5 6q-2-3-5-3q-3 0-5.5 3z" fill="#d89020"/>
<path d="M1 30q0-10 9.5-10q9.5 0 9.5 10z" fill="#3a78d8" stroke="#1a3a8a" stroke-width="0.6"/>
<ellipse cx="10.5" cy="12.5" rx="5.2" ry="5.8" fill="#c86a28" stroke="#1a1a1a" stroke-width="0.8"/>
<path d="M5 12q0-7 5.5-7q6 0 6 7q-2-4-5.5-4q-4 0-6 4z" fill="#222"/>
</svg>
<div class="lbl" style="left:22px;top:405px">User Accounts</div>
<svg class="a" style="left:119px;top:367px" width="32" height="32" viewBox="0 0 32 32"><circle cx="12" cy="11" r="10" fill="url(#gglobe)"/><path d="M6.0 6.0q4.0 -3.0 7.0 0t2.0 6.0q-3.0 4.0 -1.0 8.0q-5.0 -1.0 -7.0 -6.0z" fill="#3aa63a" opacity="0.9"/><path d="M15.0 3.0q5.0 2.0 6.0 7.0q-3.0 1.0 -5.0 -2.0z" fill="#4cb848" opacity="0.9"/><path d="M6 14l21-5v16l-21 6z" fill="#d8502a" stroke="#6a2a10" stroke-width="0.8"/>
<path d="M6 19l21-5M6 24l21-5M6 29l21-5M12 13v5M19 11v5M9 18v5M16 16v5M23 15v5M12 22v5M19 21v5" stroke="#f8c0a0" stroke-width="0.9"/>
</svg>
<div class="lbl" style="left:97px;top:405px">Windows<br>Firewall</div>
<svg class="a" style="left:194px;top:367px" width="32" height="32" viewBox="0 0 32 32"><path d="M2 18l4-4l18 5l-3 5l-17-3z" fill="#f4f4f8" stroke="#7a7a8a" stroke-width="0.8"/>
<path d="M4 21l17 3l0 3l-17-3z" fill="#9a9aa8" stroke="#6a6a7a" stroke-width="0.6"/>
<path d="M21 24l3-5v3l-3 5z" fill="#b8b8c4"/>
<path d="M23 20l6 2l-1 4l-6-2z" fill="#c8c8d0" stroke="#4a4a5a" stroke-width="0.8"/>
<path d="M18 12q3-3 1-7M21 13q5-4 2-10M24 14q7-6 3-13" stroke="#3ab03a" stroke-width="1.3" fill="none"/>
</svg>
<div class="lbl" style="left:172px;top:405px">Wireless<br>Network Set…</div>
<!--/ICONS-->
<!-- ===== DIALOG ===== -->
<div class="a" style="left:432px;top:195px;width:406px;height:459px;border-radius:7px 7px 0 0;background:#0832c8;overflow:hidden">
  <div class="a" style="left:0;top:0;width:406px;height:29px;background:linear-gradient(180deg,#0a3fbd 0,#3a8df8 1px,#2b86f6 3px,#0c6aee 5px,#0058e2 8px,#0052de 14px,#0057e4 19px,#0064f5 22px,#0062f0 26px,#0046c8 28px)"></div>
</div>
<div class="t" style="left:439px;top:204px;font-weight:bold;font-size:13px;line-height:16px;color:#fff;letter-spacing:0.1px;text-shadow:1px 1px 0 #0a2a8a">Internet Properties</div>
<div class="a" style="left:789px;top:200px;width:21px;height:21px;border:1px solid #fff;border-radius:3px;background:linear-gradient(135deg,#5a8cf0,#2456d8)"></div>
<div class="t" style="left:795px;top:202px;font-weight:bold;font-size:15px;line-height:16px;color:#fff">?</div>
<div class="a" style="left:812px;top:200px;width:21px;height:21px;border:1px solid #fff;border-radius:3px;background:linear-gradient(135deg,#e87858,#c84a28)"></div>
<svg class="a" style="left:812px;top:200px" width="21" height="21"><path d="M6 6L15 15M15 6L6 15" stroke="#fff" stroke-width="2"/></svg>
<div class="a" style="left:435px;top:224px;width:400px;height:427px;background:#ece9d8"></div>


<!-- tabs -->
<div class="a" style="left:441px;top:251px;width:386px;height:362px;border:1px solid #919b9c;border-top-color:#919b9c;background:linear-gradient(180deg,#fcfcfe 0,#f9f9f6 50%,#f4f3ee 100%)"></div>
<div class="tab" style="left:494px;width:48px">Security</div>
<div class="tab" style="left:542px;width:47px">Privacy</div>
<div class="tab" style="left:590px;width:48px">Content</div>
<div class="tab" style="left:639px;width:69px">Connections</div>
<div class="tab" style="left:709px;width:55px">Programs</div>
<div class="tab" style="left:765px;width:59px">Advanced</div>
<div class="a" style="left:441px;top:231px;width:53px;height:22px;border:1px solid #919b9c;border-bottom:none;border-radius:3px 3px 0 0;background:#fcfcfe"></div>
<div class="a" style="left:441px;top:231px;width:53px;height:3px;border-radius:3px 3px 0 0;background:linear-gradient(180deg,#e68b2c,#ffc73c)"></div>
<div class="t" style="left:449px;top:235px">General</div>

<!-- Home page group -->
<div class="grp" style="left:456px;top:271px;width:357px;height:94px"></div>
<div class="gl" style="left:464px;top:264px">Home page</div>
<div class="t" style="left:508px;top:284px;letter-spacing:-0.14px">You can change which page to use for your home page.</div>
<div class="t" style="left:510px;top:308px">Address:</div>
<div class="a" style="left:570px;top:305px;width:230px;height:20px;background:#fff;border:1px solid #7f9db9"></div>
<div class="a" style="left:575px;top:308px;width:205px;height:13px;background:#316ac5"></div>
<div class="t" style="left:576px;top:308px;color:#fff;letter-spacing:0.12px">http://www.pugetsystems.com/admin/nav</div>
<div class="btn dis" style="left:548px;top:334px;width:77px">Use Current</div>
<div class="btn" style="left:635px;top:334px;width:77px">Use Default</div>
<div class="btn" style="left:721px;top:334px;width:77px">Use Blank</div>

<!-- Temp files group -->
<div class="grp" style="left:456px;top:380px;width:357px;height:82px"></div>
<div class="gl" style="left:464px;top:373px">Temporary Internet files</div>
<div class="t" style="left:508px;top:392px">Pages you view on the Internet are stored in a special folder</div>
<div class="t" style="left:508px;top:404px">for quick viewing later.</div>
<div class="btn" style="left:536px;top:431px;width:91px;border-color:#3c4a5a;box-shadow:inset 0 1px 0 1px #ffe8a8,inset 0 -1px 0 1px #f0b040,inset 1px 0 0 1px #f8cc70,inset -1px 0 0 1px #f8cc70">Delete Cookies...</div>
<div class="btn" style="left:635px;top:431px;width:78px">Delete Files...</div>
<div class="btn" style="left:721px;top:431px;width:78px">Settings...</div>

<!-- History group -->
<div class="grp" style="left:456px;top:477px;width:357px;height:86px"></div>
<div class="gl" style="left:464px;top:471px">History</div>
<div class="t" style="left:508px;top:490px">The History folder contains links to pages you've visited, for</div>
<div class="t" style="left:508px;top:503px">quick access to recently viewed pages.</div>
<div class="t" style="left:509px;top:532px">Days to keep pages in history:</div>
<div class="a" style="left:675px;top:528px;width:39px;height:20px;background:#fff;border:1px solid #7f9db9"></div>
<div class="t" style="left:678px;top:532px">20</div>
<div class="a" style="left:697px;top:529px;width:16px;height:9px;background:#c6d6f8;border-radius:2px"></div>
<div class="a" style="left:697px;top:538px;width:16px;height:9px;background:#c6d6f8;border-radius:2px"></div>
<svg class="a" style="left:697px;top:529px" width="16" height="18"><path d="M4.5 6.5L8 3L11.5 6.5z M4.5 11.5L8 15L11.5 11.5z" fill="#4d6185" stroke="#4d6185" stroke-width="0.6"/></svg>
<div class="btn" style="left:721px;top:528px;width:78px">Clear History</div>

<div class="btn" style="left:457px;top:574px;width:82px">Colors...</div>
<div class="btn" style="left:548px;top:574px;width:82px">Fonts...</div>
<div class="btn" style="left:639px;top:574px;width:83px">Languages...</div>
<div class="btn" style="left:731px;top:574px;width:81px">Accessibility...</div>

<div class="btn" style="left:593px;top:622px;width:73px;box-shadow:inset 0 0 0 1px #cee7ff,inset 0 0 0 2px #98b8ea">OK</div>
<div class="btn" style="left:674px;top:622px;width:73px">Cancel</div>
<div class="btn dis" style="left:755px;top:622px;width:72px">Apply</div>

<!--DLGICONS-->
<svg class="a" style="left:462px;top:280px" width="40" height="250" viewBox="462 280 40 250">
<!-- home page -->
<path d="M469.5 285.5h14l6 6v20h-20z" fill="#fff" stroke="#555" stroke-width="1"/>
<path d="M483.5 285.5v6h6" fill="#eee" stroke="#333" stroke-width="1"/>
<path d="M491 293h3v6h-3z" fill="#8a2a10"/>
<path d="M478.5 304.5h16v9h-16z" fill="#fffff0" stroke="#000" stroke-width="1"/>
<path d="M476.5 305l10-9.5l10 9.5" fill="none" stroke="#000" stroke-width="1.6"/>
<path d="M477.5 304l9-8.5l9 8.5" fill="none" stroke="#f8f080" stroke-width="0.8"/>
<path d="M484.5 307.5h4v6h-4z" fill="#f0f060" stroke="#000" stroke-width="0.8"/>
<!-- IE folder -->
<path d="M469 397l2-4h8l1 2h15v24h-26z" fill="#d8dc88" stroke="#5a5a3a" stroke-width="0.8"/>
<path d="M474 404l8-11.5l15 15.5l-2 3z" fill="#fff" stroke="#111" stroke-width="1"/>
<path d="M467 404h27l2 17h-27z" fill="#e0e080" stroke="#222" stroke-width="1"/>
<text x="474" y="418" font-family="Liberation Sans" font-weight="bold" font-size="18" fill="#1a2a9a" stroke="#0a1060" stroke-width="0.6" transform="skewX(-12) translate(88 0)">e</text>
<ellipse cx="481" cy="412" rx="8" ry="3" fill="none" stroke="#2a3ab0" stroke-width="1" transform="rotate(-25 481 412)"/>
<!-- history -->
<path d="M469.5 492.5h14l6 6v19h-20z" fill="#fff" stroke="#555" stroke-width="1"/>
<path d="M483.5 492.5v6h6" fill="#eee" stroke="#333" stroke-width="1"/>
<circle cx="485" cy="512" r="9" fill="#e8e8c0" stroke="#222" stroke-width="1.2"/>
<path d="M485 512L495 503v12z" fill="#6a7a2a"/>
<path d="M485 512l-6 6M485 512l9-9" stroke="#fff" stroke-width="1.6"/>
<path d="M485 504v2M478 512h2M485 519v2M491 512h2" stroke="#333" stroke-width="1"/>
</svg>
<!--/DLGICONS-->
</body></html>
